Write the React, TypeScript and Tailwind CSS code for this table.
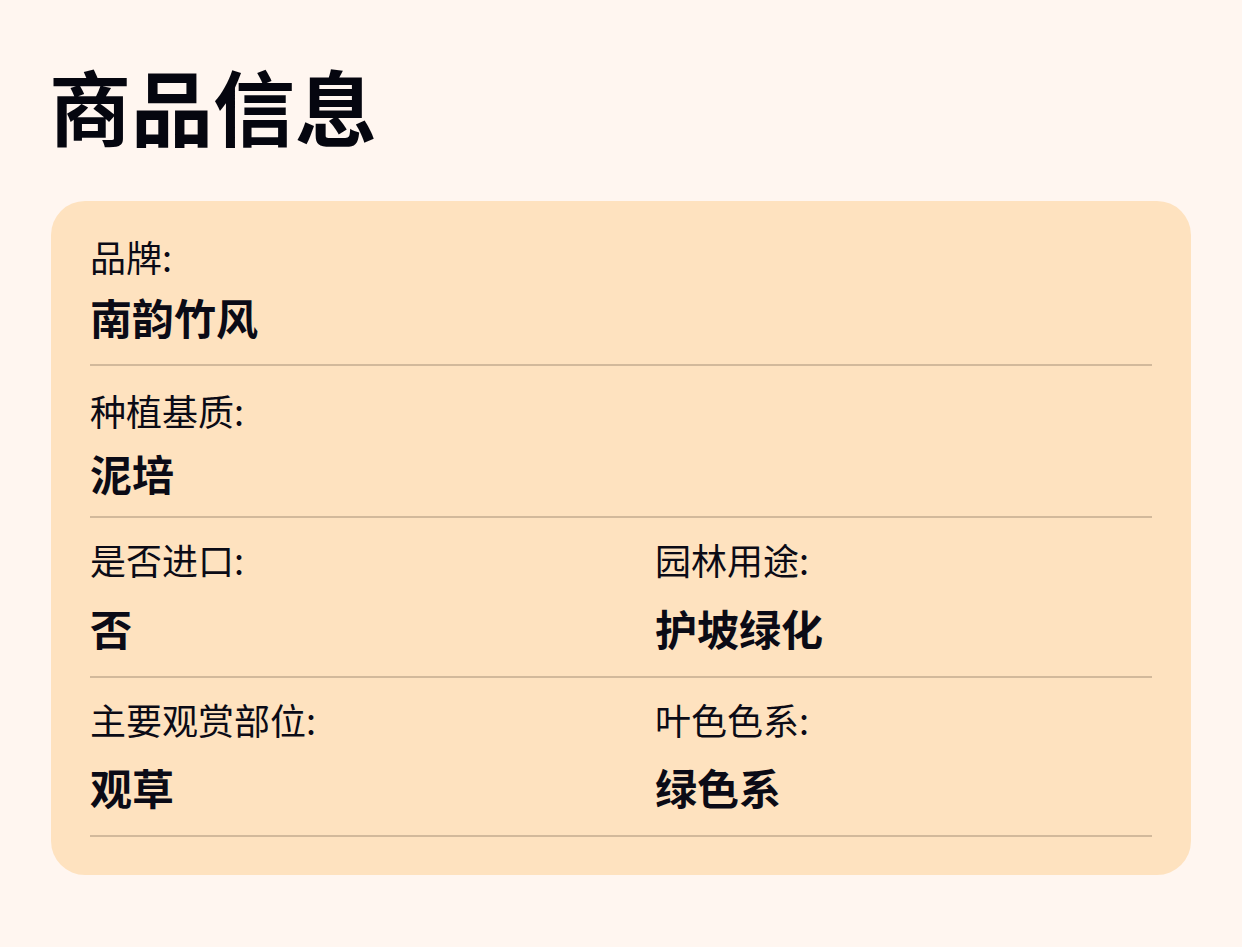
import React from "react";

const font = { fontFamily: '"Noto Sans CJK SC", "Noto Sans", sans-serif' };

export default function App() {
  return (
    <div className="min-h-[947px] w-full bg-[#fff6f0] px-[51px] pt-[52px]" style={font}>
      <h1 className="text-[82px] leading-[106px] font-bold text-[#05060f] -ml-[2px]">商品信息</h1>
      <div className="mt-[43px] w-[1140px] rounded-[34px] bg-[#fee2bf] px-[39px] pt-[8px] pb-[38px]">
        <div className="border-b-2 border-[#d2b99b] pt-[23px] pb-[19px]">
          <div className="text-[36px] leading-[48px] text-[#0b0b16]">品牌:</div>
          <div className="mt-[9px] text-[42px] leading-[56px] font-bold text-[#0b0b16]">南韵竹风</div>
        </div>
        <div className="border-b-2 border-[#d2b99b] pt-[20px] pb-[15px]">
          <div className="text-[36px] leading-[48px] text-[#0b0b16]">种植基质:</div>
          <div className="mt-[11px] text-[42px] leading-[56px] font-bold text-[#0b0b16]">泥培</div>
        </div>
        <div className="grid grid-cols-[565px_1fr] border-b-2 border-[#d2b99b] pt-[17px] pb-[20px]">
          <div>
            <div className="text-[36px] leading-[48px] text-[#0b0b16]">是否进口:</div>
            <div className="mt-[17px] text-[42px] leading-[56px] font-bold text-[#0b0b16]">否</div>
          </div>
          <div>
            <div className="text-[36px] leading-[48px] text-[#0b0b16]">园林用途:</div>
            <div className="mt-[17px] text-[42px] leading-[56px] font-bold text-[#0b0b16]">护坡绿化</div>
          </div>
        </div>
        <div className="grid grid-cols-[565px_1fr] border-b-2 border-[#d2b99b] pt-[17px] pb-[20px]">
          <div>
            <div className="text-[36px] leading-[48px] text-[#0b0b16]">主要观赏部位:</div>
            <div className="mt-[16px] text-[42px] leading-[56px] font-bold text-[#0b0b16]">观草</div>
          </div>
          <div>
            <div className="text-[36px] leading-[48px] text-[#0b0b16]">叶色色系:</div>
            <div className="mt-[16px] text-[42px] leading-[56px] font-bold text-[#0b0b16]">绿色系</div>
          </div>
        </div>
      </div>
    </div>
  );
}
